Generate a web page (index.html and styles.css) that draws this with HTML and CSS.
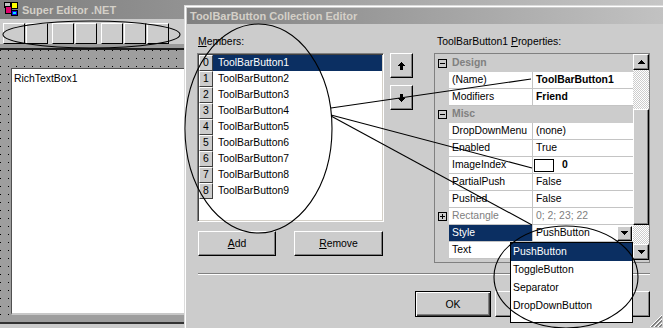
FILE: index.html
```html
<!DOCTYPE html>
<html lang="en">
<head>
    <meta charset="UTF-8">
    <title>Super Editor .NET</title>
    <link rel="stylesheet" href="styles.css">
</head>
<body>
    <div class="main-win">
        <div class="main-title">
            <svg class="app-icon" viewBox="0 0 14 15" shape-rendering="crispEdges">
                <rect x="0.5" y="0.5" width="6" height="5" fill="#c0c0c0" stroke="#000"/>
                <rect x="7.5" y="0.5" width="6" height="6" fill="#ffff00" stroke="#000"/>
                <rect x="1.5" y="4.5" width="6" height="7" fill="#e0006a" stroke="#000"/>
                <rect x="7.5" y="8.5" width="6" height="5" fill="#1010e0" stroke="#000"/>
                <rect x="9" y="10" width="3" height="2" fill="#00e0ff"/>
            </svg>
            <span>Super Editor .NET</span>
        </div>
        <div class="toolbar">
            <span class="tb-btn"></span>
            <span class="tb-btn"></span>
            <span class="tb-btn gap"></span>
            <span class="tb-btn"></span>
            <span class="tb-btn gap"></span>
            <span class="tb-btn"></span>
            <span class="tb-btn"></span>
        </div>
        <div class="tb-edge"></div>
        <div class="tb-line"></div>
        <div class="form-area">
            <div class="rtb">RichTextBox1</div>
        </div>
        <div class="main-foot"></div>
    </div>

    <div class="dialog">
        <div class="dlg-title">ToolBarButton Collection Editor</div>
        <div class="dlg-body">
            <div class="dlg-top">
                <div class="members-col">
                    <div class="label"><u>M</u>embers:</div>
                    <div class="listbox">
                        <div class="li sel"><span class="idx">0</span><span class="li-text">ToolBarButton1</span></div>
                        <div class="li"><span class="idx">1</span><span class="li-text">ToolBarButton2</span></div>
                        <div class="li"><span class="idx">2</span><span class="li-text">ToolBarButton3</span></div>
                        <div class="li"><span class="idx">3</span><span class="li-text">ToolBarButton4</span></div>
                        <div class="li"><span class="idx">4</span><span class="li-text">ToolBarButton5</span></div>
                        <div class="li"><span class="idx">5</span><span class="li-text">ToolBarButton6</span></div>
                        <div class="li"><span class="idx">6</span><span class="li-text">ToolBarButton7</span></div>
                        <div class="li"><span class="idx">7</span><span class="li-text">ToolBarButton8</span></div>
                        <div class="li"><span class="idx">8</span><span class="li-text">ToolBarButton9</span></div>
                    </div>
                    <div class="list-btns">
                        <button class="btn btn-add"><u>A</u>dd</button>
                        <button class="btn btn-remove"><u>R</u>emove</button>
                    </div>
                </div>

                <div class="move-col">
                    <button class="btn btn-move">
                        <svg width="7" height="8" viewBox="0 0 7 8" shape-rendering="crispEdges">
                            <rect x="3" y="0" width="1" height="1"/>
                            <rect x="2" y="1" width="3" height="1"/>
                            <rect x="1" y="2" width="5" height="1"/>
                            <rect x="0" y="3" width="7" height="1"/>
                            <rect x="2" y="4" width="3" height="4"/>
                        </svg>
                    </button>
                    <button class="btn btn-move">
                        <svg width="7" height="8" viewBox="0 0 7 8" shape-rendering="crispEdges">
                            <rect x="2" y="0" width="3" height="4"/>
                            <rect x="0" y="4" width="7" height="1"/>
                            <rect x="1" y="5" width="5" height="1"/>
                            <rect x="2" y="6" width="3" height="1"/>
                            <rect x="3" y="7" width="1" height="1"/>
                        </svg>
                    </button>
                </div>

                <div class="props-col">
                    <div class="label props-label">ToolBarButton1 <u>P</u>roperties:</div>
                    <div class="pgrid">
                        <div class="pg-rows">
                            <div class="pg-row cat">
                                <span class="pg-margin"><svg class="pm" viewBox="0 0 9 9" shape-rendering="crispEdges"><rect x="0.5" y="0.5" width="8" height="8" fill="none" stroke="#000"/><rect x="2" y="4" width="5" height="1"/></svg></span>
                                <span class="pg-cat">Design</span>
                            </div>
                            <div class="pg-row"><span class="pg-margin"></span><span class="pg-name">(Name)</span><span class="pg-val bold">ToolBarButton1</span></div>
                            <div class="pg-row"><span class="pg-margin"></span><span class="pg-name">Modifiers</span><span class="pg-val bold">Friend</span></div>
                            <div class="pg-row cat">
                                <span class="pg-margin"><svg class="pm" viewBox="0 0 9 9" shape-rendering="crispEdges"><rect x="0.5" y="0.5" width="8" height="8" fill="none" stroke="#000"/><rect x="2" y="4" width="5" height="1"/></svg></span>
                                <span class="pg-cat">Misc</span>
                            </div>
                            <div class="pg-row"><span class="pg-margin"></span><span class="pg-name">DropDownMenu</span><span class="pg-val">(none)</span></div>
                            <div class="pg-row"><span class="pg-margin"></span><span class="pg-name">Enabled</span><span class="pg-val">True</span></div>
                            <div class="pg-row"><span class="pg-margin"></span><span class="pg-name">ImageIndex</span><span class="pg-val"><span class="img-box"></span><b class="img-num">0</b></span></div>
                            <div class="pg-row"><span class="pg-margin"></span><span class="pg-name">PartialPush</span><span class="pg-val">False</span></div>
                            <div class="pg-row"><span class="pg-margin"></span><span class="pg-name">Pushed</span><span class="pg-val">False</span></div>
                            <div class="pg-row">
                                <span class="pg-margin"><svg class="pm" viewBox="0 0 9 9" shape-rendering="crispEdges"><rect x="0.5" y="0.5" width="8" height="8" fill="none" stroke="#000"/><rect x="2" y="4" width="5" height="1"/><rect x="4" y="2" width="1" height="5"/></svg></span>
                                <span class="pg-name muted">Rectangle</span><span class="pg-val muted">0; 2; 23; 22</span>
                            </div>
                            <div class="pg-row">
                                <span class="pg-margin"></span><span class="pg-name sel">Style</span>
                                <span class="pg-val">PushButton
                                    <span class="btn btn-dd">
                                        <svg width="7" height="4" viewBox="0 0 7 4" shape-rendering="crispEdges"><rect x="0" y="0" width="7" height="1"/><rect x="1" y="1" width="5" height="1"/><rect x="2" y="2" width="3" height="1"/><rect x="3" y="3" width="1" height="1"/></svg>
                                    </span>
                                </span>
                            </div>
                            <div class="pg-row"><span class="pg-margin"></span><span class="pg-name">Text</span><span class="pg-val"></span></div>
                        </div>
                        <div class="pg-scroll">
                            <span class="btn sb-btn">
                                <svg width="7" height="4" viewBox="0 0 7 4" shape-rendering="crispEdges"><rect x="3" y="0" width="1" height="1"/><rect x="2" y="1" width="3" height="1"/><rect x="1" y="2" width="5" height="1"/><rect x="0" y="3" width="7" height="1"/></svg>
                            </span>
                            <span class="sb-track top"></span>
                            <span class="btn sb-thumb"></span>
                            <span class="sb-track bottom"></span>
                            <span class="btn sb-btn">
                                <svg width="7" height="4" viewBox="0 0 7 4" shape-rendering="crispEdges"><rect x="0" y="0" width="7" height="1"/><rect x="1" y="1" width="5" height="1"/><rect x="2" y="2" width="3" height="1"/><rect x="3" y="3" width="1" height="1"/></svg>
                            </span>
                        </div>
                    </div>
                </div>
            </div>

            <div class="etched"></div>

            <!-- Cancel / Help sit under the open dropdown, so their captions never show -->
            <div class="dlg-btns">
                <button class="btn btn-ok">OK</button>
                <button class="btn btn-cancel"></button>
                <button class="btn btn-help"></button>
            </div>
        </div>
        <svg class="grip" viewBox="0 0 13 13">
            <line x1="13" y1="1" x2="1" y2="13" stroke="#fff"/>
            <line x1="13" y1="2" x2="2" y2="13" stroke="#808080"/>
            <line x1="13" y1="3" x2="3" y2="13" stroke="#808080"/>
            <line x1="13" y1="5" x2="5" y2="13" stroke="#fff"/>
            <line x1="13" y1="6" x2="6" y2="13" stroke="#808080"/>
            <line x1="13" y1="7" x2="7" y2="13" stroke="#808080"/>
            <line x1="13" y1="9" x2="9" y2="13" stroke="#fff"/>
            <line x1="13" y1="10" x2="10" y2="13" stroke="#808080"/>
            <line x1="13" y1="11" x2="11" y2="13" stroke="#808080"/>
        </svg>
    </div>

    <div class="dropdown">
        <div class="dd-item sel">PushButton</div>
        <div class="dd-item">ToggleButton</div>
        <div class="dd-item">Separator</div>
        <div class="dd-item">DropDownButton</div>
    </div>

    <svg class="marks" viewBox="0 0 663 328" fill="none" stroke="#000" stroke-width="1.1">
        <ellipse cx="91.5" cy="34.5" rx="88.5" ry="13.5"/>
        <ellipse cx="258.5" cy="128.5" rx="73.5" ry="104.5"/>
        <ellipse cx="566" cy="277" rx="72" ry="51"/>
        <line x1="331" y1="108" x2="531" y2="79"/>
        <line x1="331" y1="115" x2="532" y2="168"/>
        <line x1="331" y1="116" x2="532" y2="225"/>
    </svg>
</body>
</html>
```

FILE: styles.css
```css
* {
    box-sizing: border-box;
}

body {
    margin: 0;
    width: 663px;
    height: 328px;
    overflow: hidden;
    position: relative;
    background: #cccccc;
    font-family: "Liberation Sans", Arial, sans-serif;
    font-size: 10.4px;
    color: #000;
}

/* main form window (behind) */
.main-win {
    position: absolute;
    left: 0;
    top: 0;
    width: 663px;
    height: 328px;
    background: #cccccc;
}

.main-title {
    height: 19px;
    display: flex;
    align-items: center;
    padding-left: 4px;
    background: linear-gradient(to right, #7e7e7e, #c6c6c6);
    color: #d4d0c8;
    font-weight: bold;
    font-size: 11px;
}

.app-icon {
    width: 14px;
    height: 15px;
    margin-right: 4px;
}

.toolbar {
    height: 25px;
    padding: 4px 0 0 3px;
    display: flex;
    align-items: flex-start;
}

.tb-btn {
    width: 22px;
    height: 21px;
    margin-right: 1px;
    background: #cccccc;
    border: 1px solid;
    border-color: #fff #000 #000 #fff;
}

.tb-btn.gap {
    margin-left: 3px;
}

.tb-edge {
    height: 4px;
    background: #9a9a9a;
}

.tb-line {
    height: 2px;
    background: #1e1e1e;
}

.form-area {
    height: 272px;
    padding: 18px 0 0 11px;
    background-color: #9e9e9e;
    background-image: conic-gradient(at 1px 1px, transparent 75%, #000 0);
    background-size: 8px 8px;
}

.rtb {
    width: 200px;
    height: 247px;
    padding: 3px 0 0 2px;
    line-height: 13px;
    background: #fff;
    border-top: 1px solid #505050;
    border-left: 1px solid #505050;
    border-bottom: 2px solid #c8c8c8;
}

.main-foot {
    height: 2px;
    background: #333;
}

/* collection editor dialog */
.dialog {
    position: absolute;
    left: 184px;
    top: 5px;
    width: 480px;
    height: 326px;
    padding: 2px 0 0 2px;
    background: #cccccc;
    border-top: 1px solid #dcdcdc;
    border-left: 1px solid #dcdcdc;
    box-shadow: inset 1px 1px #fff;
}

.dlg-title {
    height: 16px;
    line-height: 16px;
    padding-left: 3px;
    background: linear-gradient(to right, #808080, #c2c2c2);
    color: #d4d0c8;
    font-weight: bold;
    font-size: 11px;
}

.dlg-body {
    padding: 11px 0 0 11px;
}

.dlg-top {
    display: flex;
    align-items: flex-start;
}

.label {
    height: 13px;
    line-height: 13px;
    margin-bottom: 5px;
    white-space: nowrap;
}

.props-label {
    padding-left: 3px;
}

.btn {
    font: inherit;
    color: #000;
    padding: 0;
    background: #cccccc;
    border: 1px solid;
    border-color: #fff #000 #000 #fff;
    box-shadow: inset -1px -1px #808080;
}

.members-col {
    width: 186px;
}

.listbox {
    width: 187px;
    height: 169px;
    margin-left: -1px;
    padding: 1px;
    background: #fff;
    border: 1px solid;
    border-color: #808080 #fff #fff #808080;
    box-shadow: inset 1px 1px #404040, inset -1px -1px #d4d0c8;
}

.li {
    display: flex;
    height: 16px;
    line-height: 16px;
}

.idx {
    width: 14px;
    line-height: 14px;
    text-align: center;
    background: #cccccc;
    border: 1px solid;
    border-color: #fff #404040 #404040 #fff;
}

.li-text {
    flex: 1;
    padding-left: 5px;
}

.li.sel .li-text {
    background: #0b2f62;
    color: #fff;
}

.list-btns {
    display: flex;
    margin-top: 9px;
}

.btn-add {
    width: 78px;
    height: 25px;
}

.btn-remove {
    width: 89px;
    height: 25px;
    margin-left: 18px;
}

.move-col {
    width: 23px;
    margin: 18px 0 0 6px;
    display: flex;
    flex-direction: column;
    gap: 7px;
}

.btn-move {
    width: 23px;
    height: 25px;
    display: flex;
    align-items: center;
    justify-content: center;
}

.props-col {
    width: 216px;
    margin-left: 21px;
}

/* property grid */
.pgrid {
    height: 210px;
    display: flex;
    background: #cccccc;
    border: 1px solid #808080;
}

.pg-rows {
    width: 198px;
    padding-top: 1px;
}

.pg-row {
    display: flex;
    height: 17px;
    line-height: 16px;
}

.pg-margin {
    width: 14px;
    padding-left: 1px;
    display: flex;
    align-items: center;
    justify-content: center;
}

.pm {
    width: 9px;
    height: 9px;
}

.pg-cat {
    flex: 1;
    padding-left: 3px;
    font-weight: bold;
    color: #808080;
}

.pg-name {
    width: 84px;
    padding-left: 3px;
    white-space: nowrap;
    overflow: hidden;
    background: #fff;
    border-right: 1px solid #c4c4c4;
    border-bottom: 1px solid #c4c4c4;
}

.pg-name.sel {
    background: #0b2f62;
    color: #fff;
}

.pg-val {
    width: 100px;
    padding-left: 3px;
    display: flex;
    align-items: center;
    white-space: nowrap;
    background: #fff;
    border-bottom: 1px solid #c4c4c4;
}

.bold {
    font-weight: bold;
}

.muted {
    color: #808080;
}

.img-box {
    width: 20px;
    height: 13px;
    margin-left: -2px;
    background: #fff;
    border: 1px solid #000;
}

.img-num {
    margin-left: 8px;
}

.btn-dd {
    width: 15px;
    height: 15px;
    margin-left: auto;
    margin-right: 1px;
    display: flex;
    align-items: center;
    justify-content: center;
}

.pg-scroll {
    width: 16px;
    display: flex;
    flex-direction: column;
}

.sb-btn {
    height: 16px;
    display: flex;
    align-items: center;
    justify-content: center;
}

.sb-track {
    background-color: #fff;
    background-image: conic-gradient(#cccccc 25%, #fff 0 50%, #cccccc 0 75%, #fff 0);
    background-size: 2px 2px;
}

.sb-track.top {
    height: 39px;
}

.sb-track.bottom {
    height: 19px;
}

.sb-thumb {
    height: 116px;
}

.etched {
    width: 452px;
    margin-top: 10px;
    border-top: 1px solid #808080;
    border-bottom: 1px solid #fff;
}

.dlg-btns {
    display: flex;
    margin-top: 16px;
}

.btn-ok {
    width: 76px;
    height: 26px;
    margin-left: 217px;
    border: 1px solid #000;
    box-shadow: inset 1px 1px #fff, inset -1px -1px #404040, inset -2px -2px #808080;
}

.btn-cancel {
    width: 75px;
    height: 26px;
    margin-left: 4px;
}

.btn-help {
    width: 75px;
    height: 26px;
    margin-left: 5px;
}

.grip {
    position: absolute;
    right: 2px;
    bottom: 4px;
    width: 13px;
    height: 13px;
}

/* open Style dropdown */
.dropdown {
    position: absolute;
    left: 510px;
    top: 242px;
    width: 123px;
    height: 81px;
    background: #fff;
    border: 1px solid #000;
}

.dd-item {
    height: 18px;
    line-height: 18px;
    padding-left: 2px;
}

.dd-item.sel {
    background: #0b2f62;
    color: #fff;
}

/* hand-drawn annotation marks */
.marks {
    position: absolute;
    left: 0;
    top: 0;
    width: 663px;
    height: 328px;
    pointer-events: none;
}
```
